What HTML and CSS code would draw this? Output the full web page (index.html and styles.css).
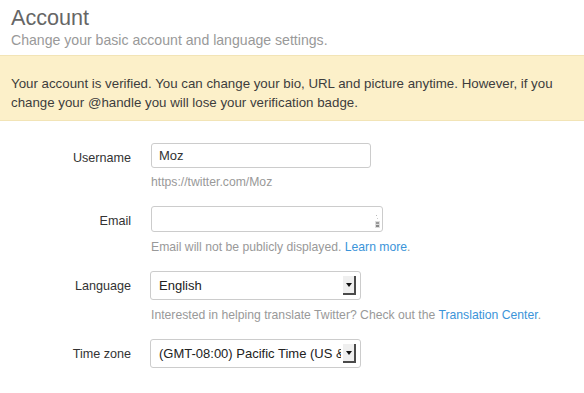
FILE: index.html
```html
<!DOCTYPE html>
<html lang="en">
<head>
  <meta charset="UTF-8">
  <title>Account</title>
  <link rel="stylesheet" href="styles.css">
</head>
<body>
  <div class="page-header">
    <h1>Account</h1>
    <p class="subtitle">Change your basic account and language settings.</p>
  </div>
  <div class="notice">
    Your account is verified. You can change your bio, URL and picture anytime. However, if you change your @handle you will lose your verification badge.
  </div>
  <div class="settings-form">
    <div class="row">
      <label class="label">Username</label>
      <div class="control">
        <div class="input username">Moz</div>
        <p class="help first">https://twitter.com/Moz</p>
      </div>
    </div>
    <div class="row">
      <label class="label">Email</label>
      <div class="control">
        <div class="input email">
          <span class="value"></span>
          <!-- password manager icon -->
          <svg class="field-icon" width="8" height="14" viewBox="0 0 8 14">
            <rect x="3" y="0" width="1" height="1" fill="#bbb"/>
            <rect x="4" y="3" width="1" height="1" fill="#ccc"/>
            <rect x="2" y="6" width="5" height="7" fill="#ddd"/>
            <rect x="3" y="7" width="3" height="2" fill="#999"/>
            <rect x="3" y="10" width="3" height="2" fill="#888"/>
          </svg>
        </div>
        <p class="help">Email will not be publicly displayed. <a href="#">Learn more</a>.</p>
      </div>
    </div>
    <div class="row">
      <label class="label">Language</label>
      <div class="control">
        <div class="select">
          <span class="value">English</span>
          <span class="arrow"></span>
        </div>
        <p class="help">Interested in helping translate Twitter? Check out the <a href="#">Translation Center</a>.</p>
      </div>
    </div>
    <div class="row">
      <label class="label">Time zone</label>
      <div class="control">
        <div class="select">
          <span class="value">(GMT-08:00) Pacific Time (US &amp; Canada)</span>
          <span class="arrow"></span>
        </div>
      </div>
    </div>
  </div>
</body>
</html>
```

FILE: styles.css
```css
* {
  margin: 0;
  padding: 0;
  box-sizing: border-box;
}
body {
  background: #ffffff;
  font-family: "Liberation Sans", Arial, sans-serif;
  color: #333;
}
.page-header {
  padding: 5px 11px 0;
  height: 55px;
}
.page-header h1 {
  font-size: 21.6px;
  font-weight: normal;
  color: #666;
  line-height: 26px;
}
.subtitle {
  font-size: 14.1px;
  color: #999;
  line-height: 18px;
}
.notice {
  background: #fcf0c9;
  border-top: 1px solid #f2e4b6;
  border-bottom: 1px solid #f2e4b6;
  padding: 18px 11px 0;
  font-size: 13.3px;
  line-height: 19px;
  color: #3d3d3d;
  height: 66px;
}
.settings-form {
  padding-top: 22px;
}
.row {
  display: grid;
  grid-template-columns: 131px 1fr;
  column-gap: 20px;
  margin-bottom: 16px;
}
.label {
  text-align: right;
  font-size: 12.6px;
  color: #333;
  line-height: 26px;
  padding-top: 2px;
}
.control {
  display: flex;
  flex-direction: column;
  align-items: flex-start;
}
.input {
  height: 26px;
  border: 1px solid #ccc;
  border-radius: 3px;
  font-size: 13px;
  line-height: 24px;
  padding: 0 7px;
  color: #333;
  background: #fff;
}
.username {
  width: 220px;
  height: 25px;
  line-height: 23px;
}
.email {
  width: 232px;
  display: flex;
  justify-content: space-between;
  align-items: center;
  padding-right: 1px;
}
.field-icon {
  margin-top: 6px;
}
.help {
  font-size: 12.2px;
  color: #999;
  line-height: 16px;
  margin-top: 7px;
}
.help.first {
  margin-top: 6px;
}
.help a {
  color: #3b94d9;
  text-decoration: none;
}
.select {
  margin-left: -1px;
  width: 211px;
  height: 29px;
  border: 1px solid #ccc;
  border-radius: 3px;
  display: flex;
  align-items: center;
  padding: 0 4px 0 8px;
  gap: 2px;
  background: #fff;
}
.select .value {
  flex: 1;
  font-size: 13px;
  color: #222;
  white-space: nowrap;
  overflow: hidden;
}
.select .arrow {
  position: relative;
  width: 13px;
  height: 19px;
  background: #efefef;
  border-right: 2px solid #4a4a4a;
  border-bottom: 2px solid #4a4a4a;
  flex-shrink: 0;
}
.select .arrow::after {
  content: "";
  position: absolute;
  left: 3px;
  top: 7px;
  border-left: 3px solid transparent;
  border-right: 3px solid transparent;
  border-top: 4px solid #111;
}
```
